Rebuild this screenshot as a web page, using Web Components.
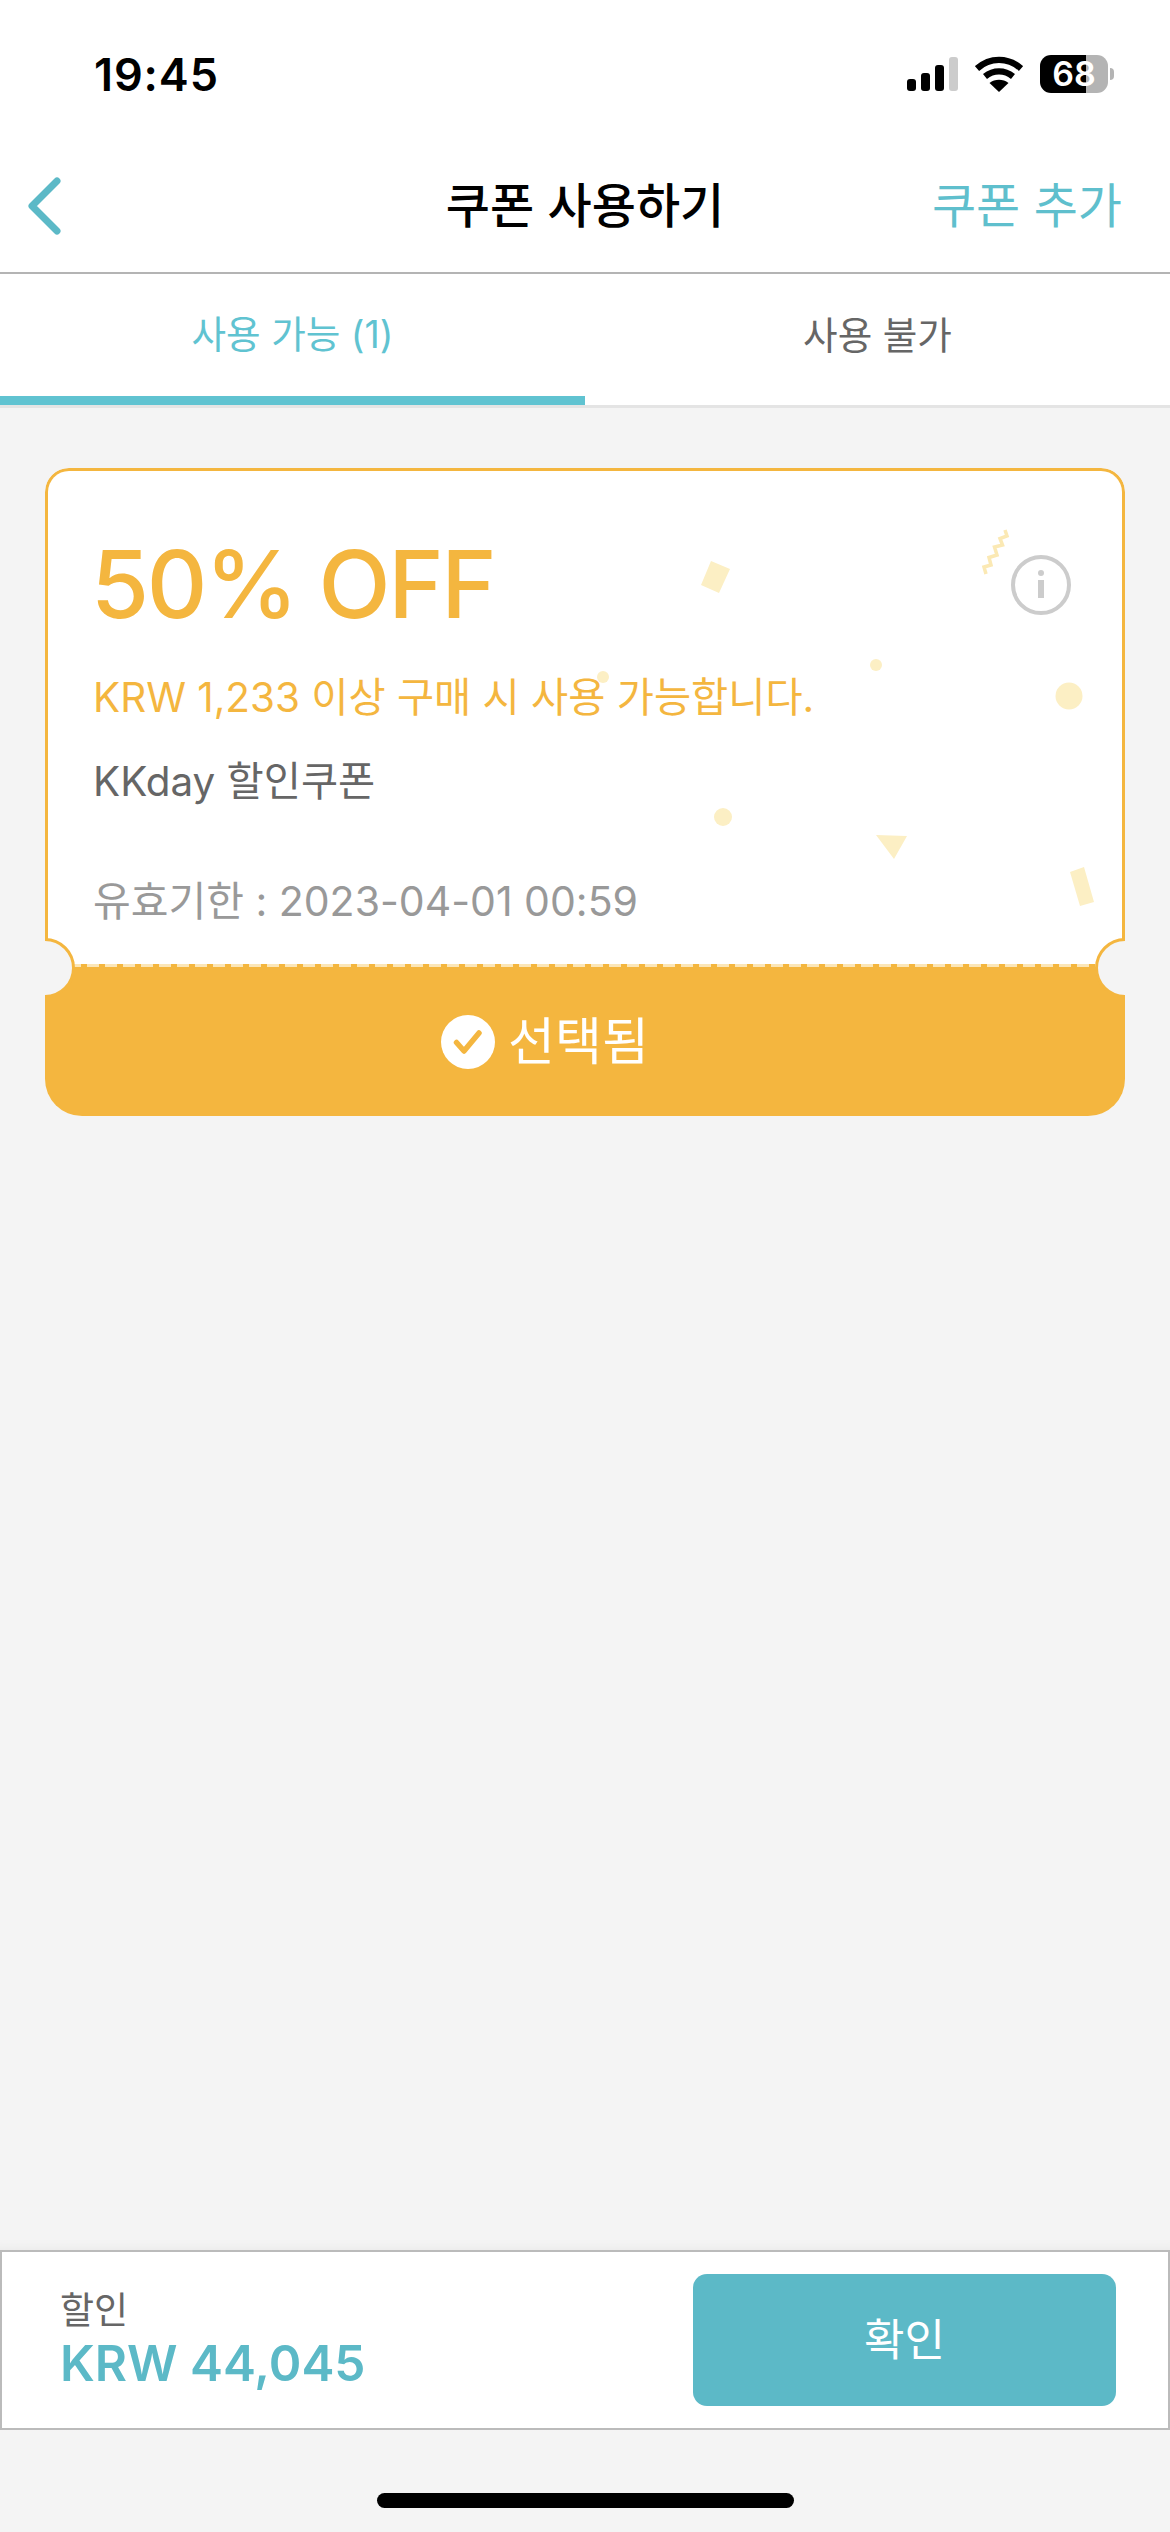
<!DOCTYPE html>
<html lang="ko"><head><meta charset="utf-8"><title>쿠폰 사용하기</title>
<style>
html,body{margin:0;padding:0;height:100%}
body{width:1170px;height:2532px;background:#f4f4f4;font-family:Inter,"Noto Sans CJK KR",sans-serif;overflow:hidden}
coupon-screen{height:2532px}
</style></head><body>
<coupon-screen>
  <status-bar slot="top"></status-bar>
  <nav-bar slot="top" heading="쿠폰 사용하기" action="쿠폰 추가"></nav-bar>
  <tab-bar slot="top"></tab-bar>
  <coupon-card title-text="50% OFF" cond="KRW 1,233 이상 구매 시 사용 가능합니다." name="KKday 할인쿠폰" expiry="유효기한 : 2023-04-01 00:59" state="선택됨"></coupon-card>
  <bottom-bar slot="bottom" label="할인" amount="KRW 44,045" button="확인"></bottom-bar>
  <home-indicator slot="bottom"></home-indicator>
</coupon-screen>
<script>
const def=(name,html,init)=>customElements.define(name,class extends HTMLElement{
  connectedCallback(){ if(this.shadowRoot) return;
    const a=k=>this.getAttribute(k)||'';
    this.attachShadow({mode:'open'}).innerHTML=html.replace(/\{\{(.+?)\}\}/g,(_,k)=>a(k));
  }});
const F='Inter,"Noto Sans CJK KR",sans-serif';
def('coupon-screen',`<style>
:host{display:flex;flex-direction:column;width:1170px;background:#f4f4f4;font-family:${F}}
main{flex:1;padding:60px 45px 0;display:flex;flex-direction:column;box-shadow:inset 0 -14px 14px -14px rgba(0,0,0,.06)}
</style><slot name="top"></slot><main><slot></slot></main><slot name="bottom"></slot>`);

def('status-bar',`<style>
:host{display:flex;align-items:center;justify-content:space-between;height:142px;background:#fff;padding:4px 56px 0 94px;box-sizing:border-box}
.t{font:600 45px/1 Inter,"Liberation Sans",sans-serif;color:#000;letter-spacing:.9px;margin-top:2px}
.icons{display:flex;align-items:center;gap:17px;margin-top:2px}
svg{display:block}
.bat{width:68px;height:38px;border-radius:11px;background:linear-gradient(90deg,#000 0 46px,#b4b4b4 46px);display:flex;align-items:center;justify-content:center;font:600 34px/1 Inter,"Liberation Sans",sans-serif;color:#fff}
.batwrap{display:flex;align-items:center;gap:2px}
.cap{width:4px;height:12px;background:#b4b4b4;border-radius:0 6px 6px 0}
</style>
<span class="t">19:45</span>
<div class="icons">
<svg width="51" height="34" viewBox="0 0 51 34"><rect x="0" y="22" width="9" height="12" rx="3"/><rect x="14" y="16" width="9" height="18" rx="3"/><rect x="28" y="8" width="9" height="26" rx="3"/><rect x="42" y="0" width="9" height="34" rx="3" fill="#ccc"/></svg>
<svg width="48" height="36" viewBox="0 0 48 36"><path d="M2 12.500C15 1 33 1 46 12.500" fill="none" stroke="#000" stroke-width="6.400"/><path d="M10 20.500c8.500-6.800 19.500-6.800 28 0" fill="none" stroke="#000" stroke-width="6.400"/><path d="M24 36 14.500 27c5.500-4.200 13.500-4.200 19 0z"/></svg>
<div class="batwrap"><div class="bat">68</div><div class="cap"></div></div>
</div>`);

def('nav-bar',`<style>
:host{display:grid;grid-template-columns:1fr auto 1fr;align-items:center;height:130px;background:#fff;border-bottom:2px solid #b4b4b4}
svg{display:block;margin-left:24px;margin-top:-2px}
h1{margin:-10px 0 0;font:500 48px/1 "Noto Sans CJK KR",sans-serif;color:#000;white-space:nowrap}
.a{justify-self:end;margin:-10px 48px 0 0;font:400 48px/1 "Noto Sans CJK KR",sans-serif;color:#5fbfcd;white-space:nowrap}
</style>
<svg width="40" height="64" viewBox="0 0 40 64"><path d="M33 7 8 32l25 25" fill="none" stroke="#5cb9c7" stroke-width="7" stroke-linecap="round" stroke-linejoin="round"/></svg>
<h1>{{heading}}</h1><span class="a">{{action}}</span>`);

def('tab-bar',`<style>
:host{display:grid;grid-template-columns:1fr 1fr;height:134px;background:#fff;border-bottom:3px solid #e4e4e4;box-sizing:border-box}
div{display:flex;align-items:center;justify-content:center;font:400 37.600px/1 ${F};color:#666;padding-bottom:8px;box-sizing:border-box;height:131px}
.on{color:#60c3d1;border-bottom:9px solid #60c3d1;padding-bottom:0}
</style><div class="on">사용 가능 (1)</div><div>사용 불가</div>`);

def('coupon-card',`<style>
:host{display:block;position:relative;width:1080px;height:648px;border-radius:24px 24px 37px 37px;overflow:hidden;font-family:${F}}
.top{position:relative;height:499px;box-sizing:border-box;background:#fff;border:3px solid #f4b63f;border-bottom:0;border-radius:24px 24px 0 0;padding:66px 0 0 46px}
.conf{position:absolute;left:-3px;top:-3px;pointer-events:none}
.body{position:relative;display:flex;flex-direction:column}
.h{font:450 94px/1 ${F};color:#f4b63f;height:94px;letter-spacing:-2.400px;margin-left:-3px}
.c{font:400 40.400px/1 ${F};color:#f4b63f;margin-top:47px;margin-left:-1px}
.n{font:400 40.400px/1 ${F};color:#666;margin-top:44px;margin-left:-1px}
.e{font:400 41px/1 ${F};color:#999;margin-top:78px;margin-left:-1px}
.dash{height:3px;margin-top:-3px;position:relative;background:repeating-linear-gradient(90deg,#f4b63f 0 6px,#fbe6b8 6px 18px)}
.bot{height:149px;background:#f4b63f;display:flex;align-items:center;justify-content:center;gap:13px;color:#fff;font:400 51px/1 ${F};padding-right:80px;box-sizing:border-box}
.bot svg{display:block}
.notch{position:absolute;top:470px;width:60px;height:60px;border-radius:50%;box-sizing:border-box;background:#f4f4f4;border:3px solid #f4b63f}
.l{left:-30px}.r{right:-30px}
</style>
<div class="top">
<svg class="conf" width="1080" height="648" viewBox="45 468 1080 648">
<g fill="#fcefc4">
<path d="M711 561l19 8-11 24-18-8z"/>
<circle cx="603" cy="677" r="6"/><circle cx="876" cy="665" r="6"/><circle cx="1069" cy="696" r="13.500"/><circle cx="723" cy="817" r="9"/>
<path d="M876 835l31 1-13 23z"/><path d="M1070 872l14-5 10 35-14 4z"/>
</g>
<path d="M1005 530l2 6-7 2.500 2.500 6.500-8 2 2.500 8-8 2.500 2 7.500-7 2 2 7" fill="none" stroke="#fbe9b4" stroke-width="3.500"/>
<circle cx="1041" cy="585" r="28" fill="none" stroke="#ccc" stroke-width="4"/>
<circle cx="1041" cy="573" r="3" fill="#ccc"/><rect x="1038" y="580" width="6" height="18" fill="#ccc"/>
</svg>
<div class="body">
<div class="h">{{title-text}}</div><div class="c">{{cond}}</div><div class="n">{{name}}</div><div class="e">{{expiry}}</div>
</div></div>
<div class="dash"></div>
<div class="bot"><svg width="54" height="54" viewBox="0 0 54 54"><circle cx="27" cy="27" r="27" fill="#fff"/><path d="M15.500 27.500 23 36l15-18" fill="none" stroke="#f4b63f" stroke-width="5.500" stroke-linecap="round" stroke-linejoin="round"/></svg><span>{{state}}</span></div>
<div class="notch l"></div><div class="notch r"></div>`);

def('bottom-bar',`<style>
:host{display:flex;align-items:center;justify-content:space-between;height:180px;box-sizing:border-box;background:#fff;border:2px solid #bbb;padding:0 52px 0 58px;font-family:${F}}
.l{font:400 37px/1 ${F};color:#666;margin-bottom:10px}
.a{font:600 49.500px/1 ${F};color:#5cb9c7}
.b{width:423px;height:132px;border-radius:14px;background:#5cb9c7;color:#fff;display:flex;align-items:center;justify-content:center;font:400 44px/1 ${F}}
</style><div><div class="l">{{label}}</div><div class="a">{{amount}}</div></div><div class="b">{{button}}</div>`);

def('home-indicator',`<style>
:host{display:flex;justify-content:center;height:102px;box-sizing:border-box;padding-top:63px;background:#f4f4f4}
i{display:block;width:417px;height:15px;border-radius:8px;background:#000}
</style><i></i>`);
</script>
</body></html>
